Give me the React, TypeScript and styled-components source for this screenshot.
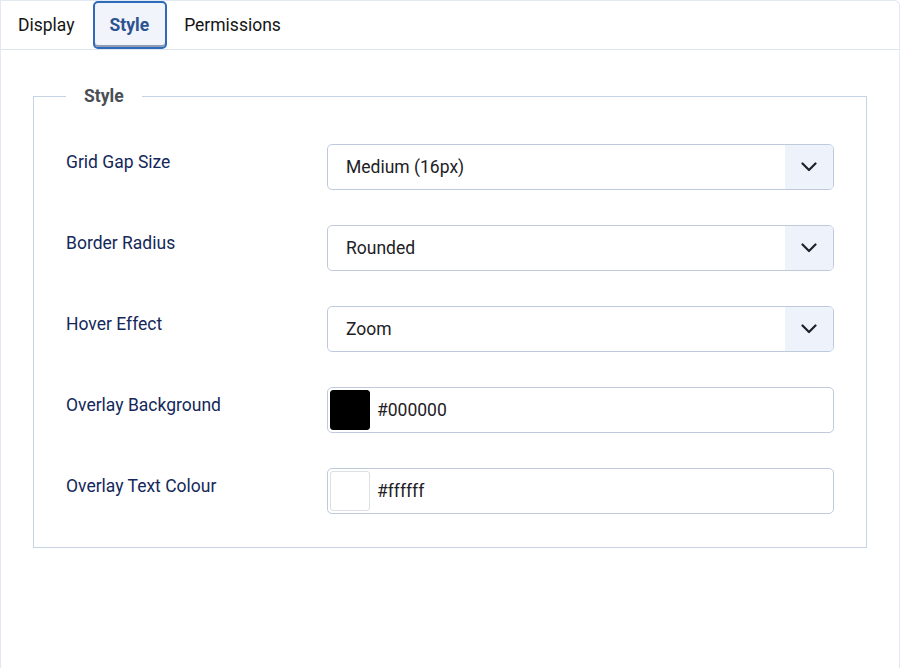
import React from "react";
import styled, { createGlobalStyle } from "styled-components";

const Global = createGlobalStyle`
  html, body { margin: 0; padding: 0; background: #ffffff; }
  body { font-family: Roboto, "Noto Sans", Arial, sans-serif; -webkit-font-smoothing: antialiased; }
  * { box-sizing: border-box; }
`;

const Panel = styled.div`
  width: 900px;
  height: 668px;
  border: 1px solid #e3e9f2;
  border-bottom: none;
  border-radius: 0 6px 0 0;
  background: #fff;
`;

const TabBar = styled.div`
  display: flex;
  height: 49px;
  border-bottom: 1px solid #dfe5ee;
`;

const Tab = styled.button<{ $active?: boolean }>`
  height: 48px;
  padding: 0 16px 0 15px;
  font-family: Roboto, Arial, sans-serif;
  font-size: 17.5px;
  font-weight: ${(p) => (p.$active ? 700 : 400)};
  color: ${(p) => (p.$active ? "#2c5290" : "#141414")};
  background: ${(p) => (p.$active ? "#f1f4fa" : "transparent")};
  border: 2px solid ${(p) => (p.$active ? "#2d6ab9" : "transparent")};
  border-radius: 5px;
  box-shadow: ${(p) => (p.$active ? "inset 0 -2px 0 #8d9db5" : "none")};
  cursor: pointer;
`;

const Body = styled.div`
  padding: 36px 32px 0 32px;
`;

const Fieldset = styled.fieldset`
  margin: 0;
  padding: 38px 32px 33px 32px;
  border: 1.5px solid #c6d3e5;
  min-width: 0;
`;

const Legend = styled.legend`
  padding: 0 18px;
  margin-left: 0;
  font-size: 17.5px;
  font-weight: 700;
  color: #4a4f55;
  line-height: 20px;
`;

const Rows = styled.div`
  display: flex;
  flex-direction: column;
  gap: 35px;
`;

const Row = styled.div`
  display: grid;
  grid-template-columns: 261px 1fr;
  align-items: start;
`;

const Label = styled.label`
  padding-top: 6px;
  font-size: 17.5px;
  line-height: 24px;
  color: #14285a;
`;

const SelectBox = styled.div`
  display: flex;
  height: 46px;
  border: 1px solid #bfcbdd;
  border-radius: 5px;
  overflow: hidden;
  background: #fff;
`;

const SelectValue = styled.div`
  flex: 1;
  display: flex;
  align-items: center;
  padding-left: 18px;
  font-size: 17.5px;
  color: #1e2125;
`;

const Caret = styled.div`
  width: 48px;
  display: flex;
  align-items: center;
  justify-content: center;
  background: #eef2fa;
`;

const ColorBox = styled.div`
  display: flex;
  align-items: center;
  gap: 7px;
  height: 46px;
  padding: 2px;
  border: 1px solid #bfcbdd;
  border-radius: 5px;
  background: #fff;
`;

const Swatch = styled.div<{ $color: string }>`
  width: 40px;
  height: 40px;
  border-radius: 3px;
  background: ${(p) => p.$color};
  border: 1px solid ${(p) => (p.$color === "#ffffff" ? "#dcdfe4" : p.$color)};
`;

const ColorText = styled.span`
  font-size: 17.5px;
  color: #1e2125;
`;

const Chevron = () => (
  <svg width="16" height="10" viewBox="0 0 16 10" fill="none">
    <path d="M1.5 1.5 L8 8 L14.5 1.5" stroke="#1e2125" strokeWidth="2.2" strokeLinecap="round" strokeLinejoin="round" />
  </svg>
);

const selects = [
  { label: "Grid Gap Size", value: "Medium (16px)" },
  { label: "Border Radius", value: "Rounded" },
  { label: "Hover Effect", value: "Zoom" },
];

const colors = [
  { label: "Overlay Background", value: "#000000" },
  { label: "Overlay Text Colour", value: "#ffffff" },
];

export default function App() {
  return (
    <>
      <Global />
      <Panel>
        <TabBar>
          <Tab>Display</Tab>
          <Tab $active>Style</Tab>
          <Tab>Permissions</Tab>
        </TabBar>
        <Body>
          <Fieldset>
            <Legend>Style</Legend>
            <Rows>
              {selects.map((s) => (
                <Row key={s.label}>
                  <Label>{s.label}</Label>
                  <SelectBox>
                    <SelectValue>{s.value}</SelectValue>
                    <Caret>
                      <Chevron />
                    </Caret>
                  </SelectBox>
                </Row>
              ))}
              {colors.map((c) => (
                <Row key={c.label}>
                  <Label>{c.label}</Label>
                  <ColorBox>
                    <Swatch $color={c.value} />
                    <ColorText>{c.value}</ColorText>
                  </ColorBox>
                </Row>
              ))}
            </Rows>
          </Fieldset>
        </Body>
      </Panel>
    </>
  );
}
